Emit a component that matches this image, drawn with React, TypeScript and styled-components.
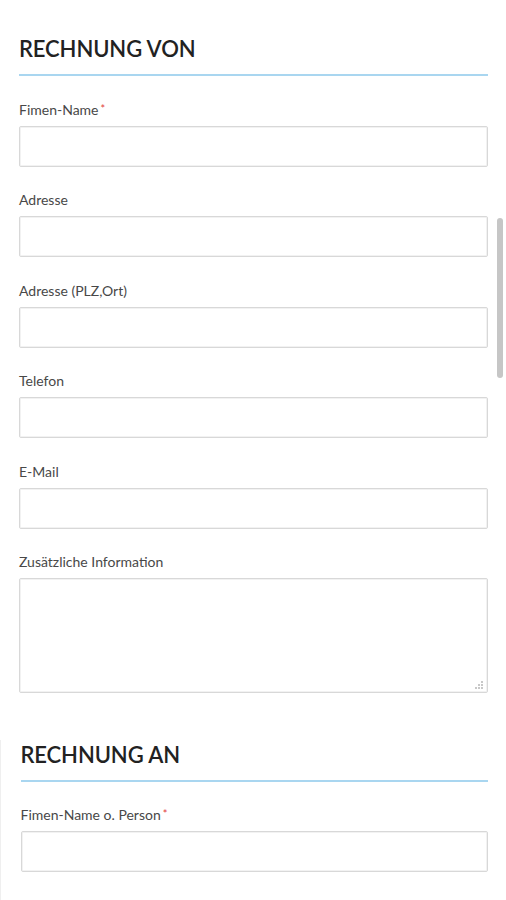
import React from "react";
import styled, { createGlobalStyle } from "styled-components";

const Global = createGlobalStyle`
  html, body { margin: 0; padding: 0; background: #fff; }
  body { font-family: Lato, "Open Sans", sans-serif; color: #333; }
  * { box-sizing: border-box; }
`;

const Page = styled.div`
  position: relative;
  width: 506px;
  min-height: 900px;
  overflow: hidden;
  padding: 36px 18px 0 19px;
`;

const Section = styled.section<{ $shift?: number }>`
  display: flex;
  flex-direction: column;
  margin-left: ${(p) => p.$shift ?? 0}px;
`;

const Heading = styled.h2<{ $gap?: number }>`
  margin: 0 0 ${(p) => p.$gap ?? 23}px;
  font-size: 22px;
  line-height: 26px;
  font-weight: 600;
  color: #222;
  letter-spacing: -0.1px;
  padding-bottom: 12px;
  border-bottom: 2px solid #a9d6f0;
`;

const Fields = styled.div`
  display: flex;
  flex-direction: column;
  gap: 23.4px;
`;

const Field = styled.div`
  display: flex;
  flex-direction: column;
  gap: 6px;
`;

const Label = styled.label`
  font-size: 14px;
  line-height: 20px;
  color: #484848;
`;

const Req = styled.span`
  color: #e2403a;
  font-size: 11px;
  vertical-align: 2px;
  margin-left: 2px;
`;

const Input = styled.input`
  width: 100%;
  height: 41px;
  border: 1px solid #d8d8d8;
  border-radius: 2px;
  box-shadow: inset 0 0 0 1px #f2f2f2;
  background: #fff;
  outline: none;
  font: inherit;
`;

const AreaWrap = styled.div`
  position: relative;
`;

const Area = styled.textarea`
  display: block;
  width: 100%;
  height: 115px;
  border: 1px solid #d8d8d8;
  border-radius: 2px;
  box-shadow: inset 0 0 0 1px #f2f2f2;
  resize: none;
  outline: none;
  font: inherit;
`;

const Grip = styled.svg`
  position: absolute;
  right: 5px;
  bottom: 4px;
`;

const Spacer = styled.div`
  height: 49px;
`;

const EdgeLine = styled.div`
  position: absolute;
  left: 0;
  top: 740px;
  bottom: 0;
  width: 1px;
  background: #efefef;
`;

const Scrollbar = styled.div`
  position: absolute;
  right: 3px;
  top: 218px;
  width: 6px;
  height: 160px;
  border-radius: 3px;
  background: #c6c6c6;
`;

type F = { label: string; req?: boolean };

const fromFields: F[] = [
  { label: "Fimen-Name", req: true },
  { label: "Adresse" },
  { label: "Adresse (PLZ,Ort)" },
  { label: "Telefon" },
  { label: "E-Mail" },
];

const LabelText = ({ f }: { f: F }) => (
  <Label>
    {f.label}
    {f.req && <Req>*</Req>}
  </Label>
);

export default function App() {
  return (
    <>
      <Global />
      <Page>
        <Section>
          <Heading>RECHNUNG VON</Heading>
          <Fields>
            {fromFields.map((f) => (
              <Field key={f.label}>
                <LabelText f={f} />
                <Input />
              </Field>
            ))}
            <Field>
              <Label>Zusätzliche Information</Label>
              <AreaWrap>
                <Area />
                <Grip width="10" height="10" viewBox="0 0 10 10">
                  <rect x="8" y="2" width="2" height="2" fill="#c8c8c8" />
                  <rect x="5" y="5" width="2" height="2" fill="#c8c8c8" />
                  <rect x="8" y="5" width="2" height="2" fill="#c8c8c8" />
                  <rect x="2" y="8" width="2" height="2" fill="#c8c8c8" />
                  <rect x="5" y="8" width="2" height="2" fill="#c8c8c8" />
                  <rect x="8" y="8" width="2" height="2" fill="#c8c8c8" />
                </Grip>
              </AreaWrap>
            </Field>
          </Fields>
        </Section>
        <Spacer />
        <Section $shift={1.5}>
          <Heading $gap={22}>RECHNUNG AN</Heading>
          <Fields>
            <Field>
              <LabelText f={{ label: "Fimen-Name o. Person", req: true }} />
              <Input />
            </Field>
          </Fields>
        </Section>
        <EdgeLine />
        <Scrollbar />
      </Page>
    </>
  );
}
